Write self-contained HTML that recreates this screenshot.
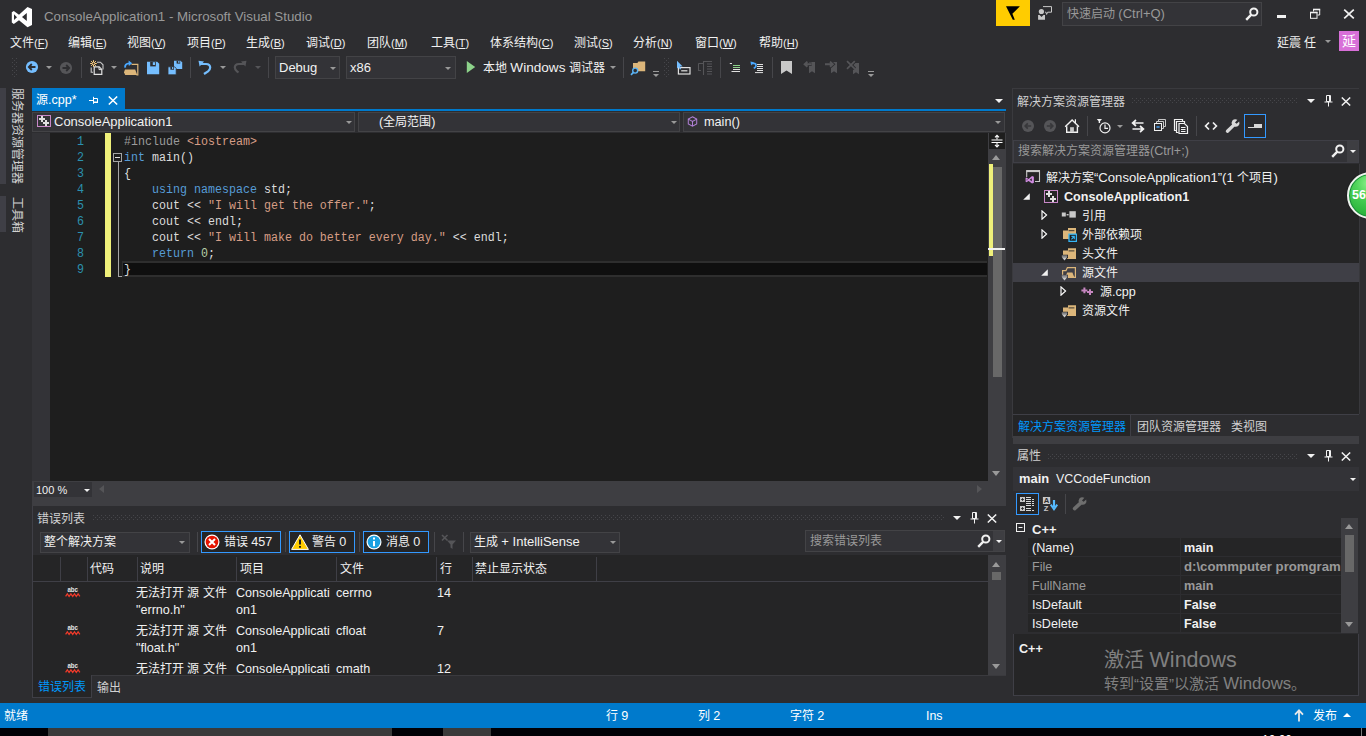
<!DOCTYPE html>
<html lang="zh-CN">
<head>
<meta charset="utf-8">
<title>ConsoleApplication1 - Microsoft Visual Studio</title>
<style>
html,body{margin:0;padding:0;}
html{width:1366px;height:736px;overflow:hidden;background:#2d2d30;}
body{width:1366px;height:736px;overflow:hidden;background:#2d2d30;position:relative;
 font-family:"Liberation Sans",sans-serif;font-size:12px;color:#f1f1f1;line-height:16px;}
#root{position:absolute;left:0;top:0;width:1366px;height:736px;overflow:hidden;background:#2d2d30;}
.a{position:absolute;}
.t{position:absolute;white-space:nowrap;line-height:16px;height:16px;}
.code{margin-top:1px;transform:scaleY(1.12);transform-origin:0 12px;font-family:"Liberation Mono",monospace;font-size:11.667px;line-height:16px;white-space:pre;position:absolute;height:16px;color:#dcdcdc;}
.kw{color:#569cd6;}
.st{color:#d69d85;}
.pp{color:#9b9b9b;}
.nm{color:#b5cea8;}
.ln{margin-top:1px;transform:scaleY(1.12);transform-origin:0 12px;position:absolute;left:50px;width:48px;text-align:right;color:#2b91af;font-family:"Liberation Mono",monospace;font-size:11.667px;line-height:16px;height:16px;}
.grip{position:absolute;height:5px;background-image:radial-gradient(circle at 0.5px 0.5px,#46464a 0.6px,transparent 0.7px),radial-gradient(circle at 2.5px 2.5px,#46464a 0.6px,transparent 0.7px);background-size:4px 4px;}
.combo{position:absolute;background:#333337;border:1px solid #434346;box-sizing:border-box;}
.arr{position:absolute;width:0;height:0;border-left:3px solid transparent;border-right:3px solid transparent;border-top:3px solid #999;}
.l{font-size:12.6px;}
.m{font-size:11px;}
.z{display:inline-block;white-space:nowrap;font-size:inherit;}
.sep{position:absolute;width:1px;background:#46464a;}
</style>
</head>
<body>
<div id="root">

<!-- ===== TITLE BAR ===== -->
<div id="titlebar" class="a" style="left:0;top:0;width:1366px;height:30px;">
  <svg class="a" style="left:0;top:0" width="44" height="32" viewBox="0 0 44 32"><path fill="#fff" fill-rule="evenodd" d="M27.5 6.9L32 9.1V25L27.5 27.2L19 20.2L13.8 24L11.8 22.5V12.2L13.8 10.9L19 14.8ZM26.8 13V21.1L22 17ZM14 14.3V20L17 17.2Z"/></svg>
  <div class="t" style="left:44px;top:9px;font-size:13.3px;color:#999;">ConsoleApplication1 - Microsoft Visual Studio</div>
  <div class="a" style="left:996px;top:0;width:34px;height:26px;background:#ffcc00;"></div>
  <svg class="a" style="left:1004px;top:4px" width="18" height="18" viewBox="0 0 18 18"><path fill="#000" d="M2 2.2H15.9L8.4 9.8L10.8 15.7H8.8Z"/></svg>
  <svg class="a" style="left:1036px;top:5px" width="18" height="16" viewBox="0 0 18 16"><circle cx="5.4" cy="6.5" r="2.6" fill="#c8c8c8"/><path fill="#c8c8c8" d="M2.1 10.1H3.6L5.5 12L7.5 10.1H9V14.7H2.1Z"/><path fill="none" stroke="#c8c8c8" stroke-width="1" d="M7 1.6H15.5V7.2H11.6L10.6 9.4L10 7.2H9.2"/></svg>
  <div class="a" style="left:1062px;top:2px;width:200px;height:24px;background:#333337;border:1px solid #434346;box-sizing:border-box;"></div>
  <div class="t" style="left:1067px;top:6px;color:#999;font-size:12px;"><span class="z" style="width:48px">快速启动</span> <span style="font-size:13px">(Ctrl+Q)</span></div>
  <svg class="a" style="left:1244px;top:6px" width="16" height="16" viewBox="0 0 16 16"><circle cx="9.8" cy="6" r="3.6" fill="none" stroke="#f1f1f1" stroke-width="2"/><path d="M7.3 8.7L2.2 13.8" stroke="#f1f1f1" stroke-width="2.4" stroke-linecap="butt"/></svg>
  <div class="a" style="left:1277px;top:15px;width:9px;height:3px;background:#f1f1f1;"></div>
  <svg class="a" style="left:1309px;top:8px" width="13" height="12" viewBox="0 0 13 12"><path fill="none" stroke="#f1f1f1" stroke-width="1" d="M4.5 3.5V1.5H10.7V7H8.5"/><path d="M4 1.5H11.2" stroke="#f1f1f1" stroke-width="1.6"/><rect x="1.5" y="4.5" width="6.5" height="5.8" fill="none" stroke="#f1f1f1" stroke-width="1"/><path d="M1 4.5H8.5" stroke="#f1f1f1" stroke-width="1.6"/></svg>
  <svg class="a" style="left:1343px;top:9px" width="12" height="10" viewBox="0 0 12 10"><path d="M1.2 0.6L10.8 9.4M10.8 0.6L1.2 9.4" stroke="#f1f1f1" stroke-width="1.7"/></svg>
</div>

<!-- ===== MENU BAR ===== -->
<div id="menubar" class="a" style="left:0;top:30px;width:1366px;height:24px;">
  <div class="t" style="left:10px;top:5px;"><span class="z" style="width:24px">文件</span><span class="m">(<u>F</u>)</span></div>
  <div class="t" style="left:68px;top:5px;"><span class="z" style="width:24px">编辑</span><span class="m">(<u>E</u>)</span></div>
  <div class="t" style="left:127px;top:5px;"><span class="z" style="width:24px">视图</span><span class="m">(<u>V</u>)</span></div>
  <div class="t" style="left:187px;top:5px;"><span class="z" style="width:24px">项目</span><span class="m">(<u>P</u>)</span></div>
  <div class="t" style="left:246px;top:5px;"><span class="z" style="width:24px">生成</span><span class="m">(<u>B</u>)</span></div>
  <div class="t" style="left:306px;top:5px;"><span class="z" style="width:24px">调试</span><span class="m">(<u>D</u>)</span></div>
  <div class="t" style="left:367px;top:5px;"><span class="z" style="width:24px">团队</span><span class="m">(<u>M</u>)</span></div>
  <div class="t" style="left:431px;top:5px;"><span class="z" style="width:24px">工具</span><span class="m">(<u>T</u>)</span></div>
  <div class="t" style="left:490px;top:5px;"><span class="z" style="width:48px">体系结构</span><span class="m">(<u>C</u>)</span></div>
  <div class="t" style="left:574px;top:5px;"><span class="z" style="width:24px">测试</span><span class="m">(<u>S</u>)</span></div>
  <div class="t" style="left:633px;top:5px;"><span class="z" style="width:24px">分析</span><span class="m">(<u>N</u>)</span></div>
  <div class="t" style="left:695px;top:5px;"><span class="z" style="width:24px">窗口</span><span class="m">(<u>W</u>)</span></div>
  <div class="t" style="left:759px;top:5px;"><span class="z" style="width:24px">帮助</span><span class="m">(<u>H</u>)</span></div>
  <div class="t" style="left:1277px;top:5px;">延震 任</div>
  <div class="arr" style="left:1325px;top:10px;"></div>
  <div class="a" style="left:1339px;top:1px;width:20px;height:20px;background:#d86fd8;"></div>
  <div class="t" style="left:1342px;top:3px;font-size:14px;color:#fff;">延</div>
</div>

<!-- ===== TOOLBAR ===== -->
<div id="toolbar" class="a" style="left:0;top:54px;width:1366px;height:30px;">
  <div class="grip" style="left:12px;top:4px;width:5px;height:20px;"></div>
  <!-- back -->
  <svg class="a" style="left:24px;top:5px" width="16" height="16" viewBox="0 0 16 16"><circle cx="8" cy="8" r="6.1" fill="#75beff"/><path d="M11.5 8H5.2M7.8 5L4.8 8L7.8 11" fill="none" stroke="#2d2d30" stroke-width="1.8"/></svg>
  <div class="arr" style="left:46px;top:12px;"></div>
  <svg class="a" style="left:58px;top:6px" width="16" height="16" viewBox="0 0 16 16"><circle cx="8" cy="8" r="6.1" fill="#555558"/><path d="M4.5 8H10.8M8.2 5L11.2 8L8.2 11" fill="none" stroke="#2d2d30" stroke-width="1.8"/></svg>
  <div class="sep" style="left:81px;top:3px;height:21px;"></div>
  <!-- new project -->
  <svg class="a" style="left:89px;top:6px" width="16" height="16" viewBox="0 0 16 16"><path d="M8 2.2H11.4L14 4.8V9.4M2.2 7.4V12.2H4" fill="none" stroke="#c8c8c8" stroke-width="1.1"/><path d="M5.2 6.8H10.2L12.8 9.4V14.4H5.2Z" fill="#2d2d30" stroke="#e0e0e0" stroke-width="1.2"/><path d="M10 6.8V9.6H12.8" fill="none" stroke="#e0e0e0" stroke-width="1"/><path d="M4.5 0.2V6.8M1.2 3.5H7.8M2.1 1.1L6.9 5.9M6.9 1.1L2.1 5.9" stroke="#ffd080" stroke-width="1"/><circle cx="4.5" cy="3.5" r="1" fill="#2d2d30"/></svg>
  <div class="arr" style="left:111px;top:12px;"></div>
  <!-- open -->
  <svg class="a" style="left:123px;top:6px" width="16" height="16" viewBox="0 0 16 16"><path d="M8.5 4.4H14.8V15H13.4" fill="none" stroke="#dcb67a" stroke-width="1.2"/><path d="M2 9.6H12.2L14.2 15H2.2L1 12.2Z" fill="#dcb67a"/><path d="M2.2 7.6Q1.4 3.6 6.4 3.4" fill="none" stroke="#4aa8ff" stroke-width="1.9"/><path d="M5.6 0.6L9.2 3.2L5.8 6Z" fill="#4aa8ff"/></svg>
  <!-- save -->
  <svg class="a" style="left:146px;top:6px" width="16" height="16" viewBox="0 0 16 16"><path d="M1 1.8H11.2L13.2 3.8V14.2H1Z" fill="#75beff"/><rect x="4.2" y="1.8" width="5.6" height="4.6" fill="#2d2d30"/><rect x="6.8" y="2.2" width="2.2" height="2.8" fill="#75beff"/></svg>
  <!-- save all -->
  <svg class="a" style="left:167px;top:6px" width="16" height="16" viewBox="0 0 16 16"><path d="M7 0.8H13.6L15.2 2.4V8.9H7Z" fill="#75beff"/><rect x="9.6" y="0.8" width="3.6" height="2.8" fill="#2d2d30"/><rect x="11.2" y="1" width="1.3" height="1.8" fill="#75beff"/><path d="M1 6.8H7.6L9.2 8.4V14.8H1Z" fill="#75beff" stroke="#2d2d30" stroke-width="0.8"/><rect x="3.4" y="6.9" width="3.6" height="2.8" fill="#2d2d30"/><rect x="5" y="7.1" width="1.3" height="1.8" fill="#75beff"/></svg>
  <div class="sep" style="left:190px;top:3px;height:21px;"></div>
  <!-- undo -->
  <svg class="a" style="left:197px;top:5px" width="16" height="16" viewBox="0 0 16 16"><path d="M4 5H9Q13.2 5 13.2 8.6Q13.2 10.6 11 12.3L7 15" fill="none" stroke="#75beff" stroke-width="2.2"/><path d="M1.5 1.8L7 2.6L2.6 7.6Z" fill="#75beff"/></svg>
  <div class="arr" style="left:220px;top:12px;"></div>
  <!-- redo disabled -->
  <svg class="a" style="left:232px;top:5px" width="16" height="16" viewBox="0 0 16 16"><path d="M12 5H7Q2.8 5 2.8 8.6Q2.8 10.6 5 12.3L6.5 13.5" fill="none" stroke="#555558" stroke-width="2.2"/><path d="M14.5 1.8L9 2.6L13.4 7.6Z" fill="#555558"/></svg>
  <div class="arr" style="left:255px;top:12px;border-top-color:#555558;"></div>
  <div class="sep" style="left:268px;top:3px;height:21px;"></div>
  <div class="combo" style="left:275px;top:2px;width:65px;height:23px;"></div>
  <div class="t" style="left:279px;top:6px;font-size:13px;">Debug</div>
  <div class="arr" style="left:330px;top:13px;"></div>
  <div class="combo" style="left:346px;top:2px;width:110px;height:23px;"></div>
  <div class="t" style="left:350px;top:6px;font-size:13px;">x86</div>
  <div class="arr" style="left:445px;top:13px;"></div>
  <!-- play -->
  <svg class="a" style="left:466px;top:6px" width="10" height="14" viewBox="0 0 10 14"><path d="M0.8 1L9.2 7L0.8 13Z" fill="#8dd28a"/></svg>
  <div class="t" style="left:483px;top:6px;"><span class="z" style="width:24px">本地</span> <span style="font-size:13.6px">Windows</span> <span class="z" style="width:36px">调试器</span></div>
  <div class="arr" style="left:610px;top:12px;"></div>
  <div class="sep" style="left:623px;top:3px;height:21px;"></div>
  <!-- find in files -->
  <svg class="a" style="left:630px;top:6px" width="16" height="16" viewBox="0 0 16 16"><path d="M3 3H7.4L8.4 1.4H15.2V11.2H3Z" fill="#dcb67a"/><circle cx="5.2" cy="10.6" r="2.5" fill="#2d2d30" stroke="#5ab3f5" stroke-width="1.4"/><path d="M3.4 12.4L1 14.8" stroke="#5ab3f5" stroke-width="1.7"/></svg>
  <div class="a" style="left:653px;top:17px;width:6px;height:1px;background:#999;"></div>
  <div class="arr" style="left:653px;top:20px;"></div>
  <div class="grip" style="left:664px;top:4px;width:5px;height:20px;"></div>
  <!-- cursor box -->
  <svg class="a" style="left:676px;top:6px" width="16" height="16" viewBox="0 0 16 16"><rect x="2.4" y="7.6" width="11.6" height="6.4" fill="#2d2d30" stroke="#e0e0e0" stroke-width="1.2"/><path d="M5.2 10.8H11.4" stroke="#e0e0e0" stroke-width="1.2"/><path d="M1 0.8L6.6 6.4L4 6.6L5.2 9L3.8 9.6L2.8 7.2L1 8.6Z" fill="#75beff"/></svg>
  <svg class="a" style="left:697px;top:6px" width="16" height="16" viewBox="0 0 16 16"><path d="M6.5 1V15M1.5 3.5V10.5H4M1.5 3.5H6.5" stroke="#555558" stroke-width="1.1" fill="none"/><path d="M6.5 1.5H15M10 4H15M10 6.5H15M10 9H15M10 11.5H15M10 14H15" stroke="#555558" stroke-width="1.1"/></svg>
  <div class="sep" style="left:720px;top:3px;height:21px;"></div>
  <svg class="a" style="left:728px;top:7px" width="16" height="16" viewBox="0 0 16 16"><path d="M1.8 2.5H4" stroke="#e0e0e0" stroke-width="1"/><path d="M5 4.5H12M5 6.5H12" stroke="#8dd28a" stroke-width="1"/><path d="M5 8.5H12M3.5 10.5H12" stroke="#e0e0e0" stroke-width="1"/></svg>
  <svg class="a" style="left:749px;top:7px" width="16" height="16" viewBox="0 0 16 16"><path d="M8 3.5H14M8 5.5H14M8 7.5H14M8 9.5H14M6 11.6H14" stroke="#e0e0e0" stroke-width="1"/><path d="M3 2.4H4.8Q7 2.4 7 4.4Q7 5.8 5.6 6.8L4.8 7.4" fill="none" stroke="#4aa8ff" stroke-width="1.7"/><path d="M1.4 0.6L5 1.2L2.2 4.4Z" fill="#4aa8ff"/></svg>
  <div class="sep" style="left:772px;top:3px;height:21px;"></div>
  <svg class="a" style="left:779px;top:5px" width="16" height="16" viewBox="0 0 16 16"><path d="M2 2H13V15L7.5 11.5L2 15Z" fill="#c8c8c8"/></svg>
  <svg class="a" style="left:802px;top:6px" width="16" height="16" viewBox="0 0 16 16"><path d="M7 2H13V13.2L10 11.2L7 13.2Z" fill="#555558"/><path d="M9.6 4.2H3M5.4 1.6L2.6 4.2L5.4 6.8" fill="none" stroke="#2d2d30" stroke-width="3.6"/><path d="M9.6 4.2H3M5.4 1.6L2.6 4.2L5.4 6.8" fill="none" stroke="#555558" stroke-width="1.9"/></svg>
  <svg class="a" style="left:823px;top:6px" width="16" height="16" viewBox="0 0 16 16"><path d="M8 2H14V13.2L11 11.2L8 13.2Z" fill="#555558"/><path d="M2 4.2H9.4M7 1.6L9.8 4.2L7 6.8" fill="none" stroke="#2d2d30" stroke-width="3.6"/><path d="M2 4.2H9.4M7 1.6L9.8 4.2L7 6.8" fill="none" stroke="#555558" stroke-width="1.9"/></svg>
  <svg class="a" style="left:845px;top:6px" width="16" height="16" viewBox="0 0 16 16"><path d="M8 3H14V14.2L11 12.2L8 14.2Z" fill="#555558"/><path d="M2 1.2L9.8 8.8M9.8 1.2L2 8.8" fill="none" stroke="#2d2d30" stroke-width="3.4"/><path d="M2 1.2L9.8 8.8M9.8 1.2L2 8.8" fill="none" stroke="#555558" stroke-width="1.7"/></svg>
  <div class="a" style="left:868px;top:17px;width:6px;height:1px;background:#999;"></div>
  <div class="arr" style="left:868px;top:20px;"></div>
</div>

<!-- ===== LEFT STRIP ===== -->
<div id="leftstrip" class="a" style="left:0;top:86px;width:30px;height:610px;">
  <div class="a" style="left:0;top:2px;width:6px;height:96px;background:#3f3f46;"></div>
  <div class="a" style="left:0;top:110px;width:6px;height:36px;background:#3f3f46;"></div>
  <div class="t" style="left:25px;top:2px;transform-origin:0 0;transform:rotate(90deg);color:#d0d0d0;">服务器资源管理器</div>
  <div class="t" style="left:25px;top:111px;transform-origin:0 0;transform:rotate(90deg);color:#d0d0d0;">工具箱</div>
</div>

<!-- ===== EDITOR ===== -->
<div id="editor" class="a" style="left:33px;top:88px;width:973px;height:418px;">
  <!-- tab row -->
  <div class="a" style="left:-1px;top:0;width:93px;height:21px;background:#007acc;"></div>
  <div class="t" style="left:3px;top:4px;color:#fff;"><span class="z" style="width:12px">源</span><span class="l">.cpp*</span></div>
  <svg class="a" style="left:56px;top:8px" width="10" height="8" viewBox="0 0 10 8"><path d="M0 4.5H4M4.5 0.8V7.8M4.5 2.5H8.5V6H4.5M4.5 6.5H9" fill="none" stroke="#fff" stroke-width="1"/></svg>
  <svg class="a" style="left:75px;top:8px" width="10" height="9" viewBox="0 0 10 9"><path d="M0.8 0.5L9.2 8.5M9.2 0.5L0.8 8.5" stroke="#fff" stroke-width="1.5"/></svg>
  <div class="a" style="left:-1px;top:21px;width:974px;height:2px;background:#007acc;"></div>
  <div class="a" style="left:962px;top:11px;width:0;height:0;border-left:4px solid transparent;border-right:4px solid transparent;border-top:4px solid #f1f1f1;"></div>
  <!-- nav bar -->
  <div class="combo" style="left:-1px;top:24px;width:323px;height:20px;"></div>
  <div class="combo" style="left:325px;top:24px;width:322px;height:20px;"></div>
  <div class="combo" style="left:650px;top:24px;width:322px;height:20px;"></div>
  <svg class="a" style="left:4px;top:27px" width="14" height="12" viewBox="0 0 14 12"><rect x="0.5" y="0.5" width="13" height="11" fill="none" stroke="#c888c8" stroke-width="1"/><path d="M2 3H8V5H2ZM4 1H6V7H4ZM6 7H12V9H6ZM8 5H10V11H8Z" fill="#e0e0e0"/></svg>
  <div class="t" style="left:21px;top:26px;font-size:13px;">ConsoleApplication1</div>
  <div class="arr" style="left:313px;top:33px;"></div>
  <div class="t" style="left:346px;top:26px;"><span class="l">(</span><span class="z" style="width:48px">全局范围</span><span class="l">)</span></div>
  <div class="arr" style="left:638px;top:33px;"></div>
  <svg class="a" style="left:653.5px;top:28px" width="11" height="11" viewBox="0 0 12 12"><path d="M6 0.8L10.6 3.4V8.6L6 11.2L1.4 8.6V3.4ZM1.4 3.4L6 6L10.6 3.4M6 6V11.2" fill="none" stroke="#b180d7" stroke-width="1.1"/></svg>
  <div class="t" style="left:671px;top:26px;font-size:12.7px;">main()</div>
  <div class="arr" style="left:962px;top:33px;"></div>
  <!-- text area -->
  <div class="a" style="left:0;top:45px;width:955px;height:348px;background:#1e1e1e;"></div>
  <div class="a" style="left:-1px;top:45px;width:18px;height:348px;background:#333337;"></div>
  <div class="a" style="left:72px;top:45px;width:6px;height:144px;background:#eff07a;"></div>
  <!-- current line -->
  <div class="a" style="left:89px;top:173px;width:865px;height:16px;background:#0f0f0f;border-top:2px solid #2e2e2e;border-bottom:2px solid #2e2e2e;border-left:1px solid #2e2e2e;box-sizing:border-box;"></div>
  <!-- outlining -->
  <div class="a" style="left:80px;top:65px;width:9px;height:9px;border:1px solid #a5a5a5;box-sizing:border-box;background:#1e1e1e;"></div>
  <div class="a" style="left:82px;top:69px;width:5px;height:1px;background:#e0e0e0;"></div>
  <div class="a" style="left:85px;top:74px;width:1px;height:115px;background:#a5a5a5;"></div>
  <div class="a" style="left:85px;top:188px;width:4px;height:1px;background:#a5a5a5;"></div>
  <div class="ln" style="left:17px;width:34px;top:45px;">1</div><div class="code" style="left:91px;top:45px;"><span class="pp">#include</span> <span class="st">&lt;iostream&gt;</span></div>
  <div class="ln" style="left:17px;width:34px;top:61px;">2</div><div class="code" style="left:91px;top:61px;"><span class="kw">int</span> main()</div>
  <div class="ln" style="left:17px;width:34px;top:77px;">3</div><div class="code" style="left:91px;top:77px;">{</div>
  <div class="ln" style="left:17px;width:34px;top:93px;">4</div><div class="code" style="left:91px;top:93px;">    <span class="kw">using</span> <span class="kw">namespace</span> std;</div>
  <div class="ln" style="left:17px;width:34px;top:109px;">5</div><div class="code" style="left:91px;top:109px;">    cout &lt;&lt; <span class="st">"I will get the offer."</span>;</div>
  <div class="ln" style="left:17px;width:34px;top:125px;">6</div><div class="code" style="left:91px;top:125px;">    cout &lt;&lt; endl;</div>
  <div class="ln" style="left:17px;width:34px;top:141px;">7</div><div class="code" style="left:91px;top:141px;">    cout &lt;&lt; <span class="st">"I will make do better every day."</span> &lt;&lt; endl;</div>
  <div class="ln" style="left:17px;width:34px;top:157px;">8</div><div class="code" style="left:91px;top:157px;">    <span class="kw">return</span> <span class="nm">0</span>;</div>
  <div class="ln" style="left:17px;width:34px;top:173px;">9</div><div class="code" style="left:91px;top:173px;">}</div>
  <!-- vertical scrollbar -->
  <div class="a" style="left:955px;top:45px;width:18px;height:373px;background:#3e3e42;"></div>
  <div class="a" style="left:956px;top:45px;width:16px;height:16px;background:#1e1e1e;"></div>
  <svg class="a" style="left:957px;top:46px" width="14" height="14" viewBox="0 0 14 14"><path d="M1.5 6H12.5M1.5 8.5H12.5" stroke="#fff" stroke-width="1.2"/><path d="M7 1.5V5.5M7 9V12.8M5 3.4L7 1.2L9 3.4M5 10.8L7 13L9 10.8" fill="none" stroke="#fff" stroke-width="1.1"/></svg>
  <div class="a" style="left:959px;top:67px;width:0;height:0;border-left:4.5px solid transparent;border-right:4.5px solid transparent;border-bottom:5px solid #999;"></div>
  <div class="a" style="left:960px;top:79px;width:9px;height:210px;background:#686868;"></div>
  <div class="a" style="left:956px;top:76px;width:4px;height:92px;background:#eff07a;"></div>
  <div class="a" style="left:955px;top:160px;width:17px;height:2px;background:#f1f1f1;"></div>
  <div class="a" style="left:959px;top:383px;width:0;height:0;border-left:4.5px solid transparent;border-right:4.5px solid transparent;border-top:5px solid #999;"></div>
  <!-- horizontal scrollbar row -->
  <div class="a" style="left:-1px;top:393px;width:956px;height:25px;background:#3e3e42;"></div>
  <div class="a" style="left:1px;top:394px;width:58px;height:15px;background:#333337;"></div>
  <div class="t" style="left:3px;top:394px;font-size:11px;">100 %</div>
  <div class="arr" style="left:51px;top:401px;border-top-color:#f1f1f1;"></div>
  <div class="a" style="left:66px;top:397px;width:0;height:0;border-top:4.5px solid transparent;border-bottom:4.5px solid transparent;border-right:5px solid #555558;"></div>
  <div class="a" style="left:944px;top:397px;width:0;height:0;border-top:4.5px solid transparent;border-bottom:4.5px solid transparent;border-left:5px solid #555558;"></div>
</div>

<!-- ===== ERROR LIST ===== -->
<div id="errorlist" class="a" style="left:33px;top:506px;width:973px;height:192px;">
  <div class="a" style="left:-1px;top:0;width:1px;height:192px;background:#3f3f46;"></div>
  <div class="a" style="left:0;top:0;width:973px;height:23px;background:#2d2d30;"></div>
  <div class="t" style="left:4px;top:5px;color:#d0d0d0;">错误列表</div>
  <div class="grip" style="left:60px;top:9px;width:851px;"></div>
  <div class="a" style="left:920px;top:10px;width:0;height:0;border-left:4px solid transparent;border-right:4px solid transparent;border-top:4px solid #f1f1f1;"></div>
  <svg class="a" style="left:937px;top:6px" width="9" height="12" viewBox="0 0 9 12"><path d="M2.5 0.5H6.5V6.5H2.5ZM5.5 0.5V6.5M0.5 7H8.5M4.5 7V11.5" fill="none" stroke="#f1f1f1" stroke-width="1"/></svg>
  <svg class="a" style="left:954px;top:8px" width="10" height="9" viewBox="0 0 10 9"><path d="M0.8 0.5L9.2 8.5M9.2 0.5L0.8 8.5" stroke="#f1f1f1" stroke-width="1.5"/></svg>
  <!-- toolbar -->
  <div class="combo" style="left:7px;top:26px;width:150px;height:21px;"></div>
  <div class="t" style="left:11px;top:28px;">整个解决方案</div>
  <div class="arr" style="left:146px;top:35px;"></div>
  <div class="sep" style="left:164px;top:26px;height:20px;"></div>
  <div class="a" style="left:168px;top:25px;width:80px;height:22px;border:1px solid #3399ff;box-sizing:border-box;background:#252526;"></div>
  <svg class="a" style="left:171px;top:28px" width="16" height="16" viewBox="0 0 16 16"><circle cx="8" cy="8" r="7.5" fill="#fff"/><circle cx="8" cy="8" r="6.3" fill="#e51400"/><path d="M5 5L11 11M11 5L5 11" stroke="#fff" stroke-width="2"/></svg>
  <div class="t" style="left:191px;top:28px;"><span class="z" style="width:24px">错误</span> <span class="l">457</span></div>
  <div class="sep" style="left:252px;top:26px;height:20px;"></div>
  <div class="a" style="left:256px;top:25px;width:66px;height:22px;border:1px solid #3399ff;box-sizing:border-box;background:#252526;"></div>
  <svg class="a" style="left:258px;top:28px" width="18" height="16" viewBox="0 0 18 16"><path d="M9 0.8L17.4 15.4H0.6Z" fill="#ffcc00" stroke="#fff" stroke-width="1" stroke-linejoin="round"/><path d="M9 5.5V10.5M9 12V13.8" stroke="#1e1e1e" stroke-width="2"/></svg>
  <div class="t" style="left:279px;top:28px;"><span class="z" style="width:24px">警告</span> <span class="l">0</span></div>
  <div class="sep" style="left:326px;top:26px;height:20px;"></div>
  <div class="a" style="left:330px;top:25px;width:66px;height:22px;border:1px solid #3399ff;box-sizing:border-box;background:#252526;"></div>
  <svg class="a" style="left:333px;top:28px" width="16" height="16" viewBox="0 0 16 16"><circle cx="8" cy="8" r="7.5" fill="#fff"/><circle cx="8" cy="8" r="6.3" fill="#1ba1e2"/><path d="M8 7V12.2M8 3.6V5.6" stroke="#fff" stroke-width="2"/></svg>
  <div class="t" style="left:353px;top:28px;"><span class="z" style="width:24px">消息</span> <span class="l">0</span></div>
  <div class="sep" style="left:401px;top:26px;height:20px;"></div>
  <svg class="a" style="left:408px;top:28px" width="16" height="16" viewBox="0 0 16 16"><path d="M6 6.5H15L11.5 10.5V15L9.5 13.5V10.5Z" fill="#555558"/><path d="M1 1L6.5 6.5M6.5 1L1 6.5" stroke="#555558" stroke-width="1.6"/></svg>
  <div class="sep" style="left:430px;top:26px;height:20px;"></div>
  <div class="combo" style="left:437px;top:26px;width:150px;height:21px;"></div>
  <div class="t" style="left:441px;top:28px;"><span class="z" style="width:24px">生成</span> <span style="font-size:13px">+ IntelliSense</span></div>
  <div class="arr" style="left:577px;top:35px;"></div>
  <div class="combo" style="left:772px;top:24px;width:200px;height:22px;"></div>
  <div class="a" style="left:960px;top:25px;width:11px;height:20px;background:#3e3e42;"></div>
  <div class="t" style="left:777px;top:27px;color:#999;">搜索错误列表</div>
  <svg class="a" style="left:943px;top:27px" width="16" height="16" viewBox="0 0 16 16"><circle cx="9.8" cy="6" r="3.6" fill="none" stroke="#f1f1f1" stroke-width="2"/><path d="M7.3 8.7L2.2 13.8" stroke="#f1f1f1" stroke-width="2.4"/></svg>
  <div class="arr" style="left:963px;top:34px;border-top-color:#f1f1f1;"></div>
  <!-- grid -->
  <div class="a" style="left:0;top:49px;width:955px;height:120px;background:#252526;"></div>
  <div class="a" style="left:0;top:75px;width:955px;height:1px;background:#3f3f46;"></div>
  <div class="a" style="left:27px;top:51px;width:1px;height:24px;background:#3f3f46;"></div>
  <div class="a" style="left:54px;top:51px;width:1px;height:24px;background:#3f3f46;"></div>
  <div class="a" style="left:104px;top:51px;width:1px;height:24px;background:#3f3f46;"></div>
  <div class="a" style="left:203px;top:51px;width:1px;height:24px;background:#3f3f46;"></div>
  <div class="a" style="left:303px;top:51px;width:1px;height:24px;background:#3f3f46;"></div>
  <div class="a" style="left:403px;top:51px;width:1px;height:24px;background:#3f3f46;"></div>
  <div class="a" style="left:439px;top:51px;width:1px;height:24px;background:#3f3f46;"></div>
  <div class="a" style="left:563px;top:51px;width:1px;height:24px;background:#3f3f46;"></div>
  <div class="t" style="left:57px;top:55px;">代码</div>
  <div class="t" style="left:107px;top:55px;">说明</div>
  <div class="t" style="left:207px;top:55px;">项目</div>
  <div class="t" style="left:307px;top:55px;">文件</div>
  <div class="t" style="left:407px;top:55px;">行</div>
  <div class="t" style="left:442px;top:55px;">禁止显示状态</div>
  <svg class="a" style="left:31.5px;top:79px" width="16" height="13" viewBox="0 0 16 13"><text x="2.4" y="6.6" font-family="Liberation Sans,sans-serif" font-size="7.4" font-weight="bold" fill="#e6e6e6" textLength="10.6" lengthAdjust="spacingAndGlyphs">abc</text><path d="M0.6 11.4L2.3 8.8L4.1 11.4L5.9 8.8L7.7 11.4L9.5 8.8L11.3 11.4L13.1 8.8L14.9 11.4" fill="none" stroke="#f03a2a" stroke-width="1.2"/></svg>
  <div class="t" style="left:103px;top:79px;">无法打开 源 文件</div>
  <div class="t l" style="left:103px;top:96px;">"errno.h"</div>
  <div class="t l" style="left:203px;top:79px;">ConsoleApplicati</div>
  <div class="t l" style="left:203px;top:96px;">on1</div>
  <div class="t l" style="left:303px;top:79px;">cerrno</div>
  <div class="t l" style="left:404px;top:79px;">14</div>
  <svg class="a" style="left:31.5px;top:117px" width="16" height="13" viewBox="0 0 16 13"><text x="2.4" y="6.6" font-family="Liberation Sans,sans-serif" font-size="7.4" font-weight="bold" fill="#e6e6e6" textLength="10.6" lengthAdjust="spacingAndGlyphs">abc</text><path d="M0.6 11.4L2.3 8.8L4.1 11.4L5.9 8.8L7.7 11.4L9.5 8.8L11.3 11.4L13.1 8.8L14.9 11.4" fill="none" stroke="#f03a2a" stroke-width="1.2"/></svg>
  <div class="t" style="left:103px;top:117px;">无法打开 源 文件</div>
  <div class="t l" style="left:103px;top:134px;">"float.h"</div>
  <div class="t l" style="left:203px;top:117px;">ConsoleApplicati</div>
  <div class="t l" style="left:203px;top:134px;">on1</div>
  <div class="t l" style="left:303px;top:117px;">cfloat</div>
  <div class="t l" style="left:404px;top:117px;">7</div>
  <svg class="a" style="left:31.5px;top:155px" width="16" height="13" viewBox="0 0 16 13"><text x="2.4" y="6.6" font-family="Liberation Sans,sans-serif" font-size="7.4" font-weight="bold" fill="#e6e6e6" textLength="10.6" lengthAdjust="spacingAndGlyphs">abc</text><path d="M0.6 11.4L2.3 8.8L4.1 11.4L5.9 8.8L7.7 11.4L9.5 8.8L11.3 11.4L13.1 8.8L14.9 11.4" fill="none" stroke="#f03a2a" stroke-width="1.2"/></svg>
  <div class="t" style="left:103px;top:155px;">无法打开 源 文件</div>
  <div class="t l" style="left:203px;top:155px;">ConsoleApplicati</div>
  <div class="t l" style="left:303px;top:155px;">cmath</div>
  <div class="t l" style="left:404px;top:155px;">12</div>
  <!-- cover below grid -->
  <div class="a" style="left:0;top:169px;width:973px;height:23px;background:#2d2d30;"></div>
  <div class="a" style="left:58px;top:169px;width:915px;height:1px;background:#3a3a3e;"></div>
  <!-- scrollbar -->
  <div class="a" style="left:955px;top:49px;width:18px;height:120px;background:#3e3e42;"></div>
  <div class="a" style="left:959px;top:56px;width:0;height:0;border-left:4.5px solid transparent;border-right:4.5px solid transparent;border-bottom:5px solid #999;"></div>
  <div class="a" style="left:959px;top:66px;width:9px;height:8px;background:#686868;"></div>
  <div class="a" style="left:959px;top:158px;width:0;height:0;border-left:4.5px solid transparent;border-right:4.5px solid transparent;border-top:5px solid #999;"></div>
  <!-- bottom tabs -->
  <div class="a" style="left:0;top:169px;width:58px;height:22px;background:#252526;border-right:1px solid #3f3f46;border-bottom:1px solid #3f3f46;box-sizing:content-box;"></div>
  <div class="t" style="left:5px;top:173px;color:#0097fb;">错误列表</div>
  <div class="t" style="left:64px;top:174px;color:#d0d0d0;">输出</div>
</div>

<!-- ===== SOLUTION EXPLORER ===== -->
<div id="solexp" class="a" style="left:1013px;top:90px;width:346px;height:348px;">
  <div class="a" style="left:-1px;top:-2px;width:347px;height:350px;border-left:1px solid #3a3a3e;border-top:1px solid #3a3a3e;box-sizing:border-box;"></div>
  <div class="t" style="left:4px;top:4px;color:#d0d0d0;">解决方案资源管理器</div>
  <div class="grip" style="left:119px;top:8px;width:166px;"></div>
  <div class="a" style="left:294px;top:9px;width:0;height:0;border-left:4px solid transparent;border-right:4px solid transparent;border-top:4px solid #f1f1f1;"></div>
  <svg class="a" style="left:311px;top:5px" width="9" height="12" viewBox="0 0 9 12"><path d="M2.5 0.5H6.5V6.5H2.5ZM5.5 0.5V6.5M0.5 7H8.5M4.5 7V11.5" fill="none" stroke="#f1f1f1" stroke-width="1"/></svg>
  <svg class="a" style="left:328px;top:7px" width="10" height="9" viewBox="0 0 10 9"><path d="M0.8 0.5L9.2 8.5M9.2 0.5L0.8 8.5" stroke="#f1f1f1" stroke-width="1.5"/></svg>
  <!-- toolbar -->
  <svg class="a" style="left:8px;top:29px" width="14" height="14" viewBox="0 0 14 14"><circle cx="7" cy="7" r="6" fill="#555558"/><path d="M10.2 7H4.6M6.8 4.4L4.2 7L6.8 9.6" fill="none" stroke="#38383b" stroke-width="1.7"/></svg>
  <svg class="a" style="left:30px;top:29px" width="14" height="14" viewBox="0 0 14 14"><circle cx="7" cy="7" r="6" fill="#555558"/><path d="M3.8 7H9.4M7.2 4.4L9.8 7L7.2 9.6" fill="none" stroke="#38383b" stroke-width="1.7"/></svg>
  <svg class="a" style="left:51px;top:28px" width="16" height="16" viewBox="0 0 16 16"><path d="M1.2 8.8L8.1 1.9L15 8.8" fill="none" stroke="#f1f1f1" stroke-width="1.4"/><path d="M2.7 8.2V14.3H13.4V8.2" fill="none" stroke="#f1f1f1" stroke-width="1.4"/><rect x="6.1" y="9.2" width="3.8" height="5" fill="#c8c8c8"/><path d="M11.4 1.2V5" stroke="#f1f1f1" stroke-width="1.2"/></svg>
  <div class="sep" style="left:74px;top:26px;height:20px;"></div>
  <svg class="a" style="left:83px;top:28px" width="16" height="16" viewBox="0 0 16 16"><circle cx="9" cy="9.9" r="5" fill="none" stroke="#f1f1f1" stroke-width="1.2"/><path d="M9 6.6V10.4H12" fill="none" stroke="#f1f1f1" stroke-width="1.2"/><path d="M0.8 1H6L4.1 3.2V5H2.7V3.2Z" fill="#f1f1f1"/></svg>
  <div class="arr" style="left:104px;top:35px;"></div>
  <svg class="a" style="left:117px;top:28px" width="16" height="16" viewBox="0 0 16 16"><path d="M13.5 5H3M6 2L2.6 5L6 8" fill="none" stroke="#f1f1f1" stroke-width="1.7"/><path d="M2.5 11H13M10 8L13.4 11L10 14" fill="none" stroke="#f1f1f1" stroke-width="1.7"/></svg>
  <svg class="a" style="left:139px;top:28px" width="16" height="16" viewBox="0 0 16 16"><path d="M6.5 3.5V1.5H13.5V8.5H11.5M4.5 5.5V3.5H11.5V10.5H9.5" fill="none" stroke="#c8c8c8" stroke-width="1"/><rect x="2.5" y="5.5" width="7" height="7" fill="none" stroke="#f1f1f1" stroke-width="1"/><path d="M4.4 9H7.6" stroke="#4aa8ff" stroke-width="1.4"/></svg>
  <svg class="a" style="left:160px;top:28px" width="16" height="16" viewBox="0 0 16 16"><path d="M3.5 12.5H1.5V1.5H9.5V3" fill="none" stroke="#f1f1f1" stroke-width="1.2"/><path d="M5.5 14.5H3.5V3.5H11.5V5" fill="none" stroke="#f1f1f1" stroke-width="1.2"/><path d="M6 5.5H11.5L14.5 8.5V15.5H6Z" fill="#2d2d30" stroke="#f1f1f1" stroke-width="1.2"/><path d="M8 9.5H12.5M8 11.5H12.5M8 13.5H12.5" stroke="#f1f1f1" stroke-width="1"/></svg>
  <div class="sep" style="left:183px;top:26px;height:20px;"></div>
  <svg class="a" style="left:191px;top:28px" width="14" height="16" viewBox="0 0 14 16"><path d="M5 4.5L1.6 8L5 11.5M9 4.5L12.4 8L9 11.5" fill="none" stroke="#f1f1f1" stroke-width="1.7"/></svg>
  <svg class="a" style="left:212px;top:28px" width="16" height="16" viewBox="0 0 16 16"><path d="M2.4 13.2L8.2 7.6" stroke="#d8d8d8" stroke-width="3.3" stroke-linecap="round"/><path d="M14.2 3.4L11.6 5.8L10 4.4L12.4 1.8Q9.4 0.4 7.4 2.6Q6 4.6 7.2 6.8L9 8.4Q11.2 9.4 13.2 8Q15.2 6.2 14.2 3.4Z" fill="#d8d8d8"/></svg>
  <div class="a" style="left:231px;top:24px;width:22px;height:24px;border:1px solid #3399ff;box-sizing:border-box;background:#2a2a2d;"></div>
  <div class="a" style="left:235px;top:37px;width:14px;height:1px;background:#d8d8d8;"></div>
  <div class="a" style="left:241px;top:34px;width:8px;height:4px;background:#d8d8d8;"></div>
  <!-- search -->
  <div class="a" style="left:0;top:50px;width:346px;height:23px;background:#333337;border:1px solid #3f3f46;box-sizing:border-box;"></div>
  <div class="a" style="left:334px;top:51px;width:11px;height:21px;background:#3e3e42;"></div>
  <div class="t" style="left:5px;top:53px;color:#999;"><span class="z" style="width:132px">搜索解决方案资源管理器</span><span class="l">(Ctrl+;)</span></div>
  <svg class="a" style="left:317px;top:53px" width="16" height="16" viewBox="0 0 16 16"><circle cx="9.8" cy="6" r="3.6" fill="none" stroke="#f1f1f1" stroke-width="2"/><path d="M7.3 8.7L2.2 13.8" stroke="#f1f1f1" stroke-width="2.4"/></svg>
  <div class="arr" style="left:336.5px;top:60px;border-top-color:#f1f1f1;"></div>
  <!-- tree -->
  <div class="a" style="left:0;top:74px;width:346px;height:250px;background:#252526;"></div>
  <div class="a" style="left:0;top:173px;width:346px;height:19px;background:#3f3f46;"></div>
  <!-- row1 solution -->
  <svg class="a" style="left:12px;top:80px" width="16" height="16" viewBox="0 0 16 16"><path d="M1.7 7V1H14.5V11.5H10" fill="none" stroke="#c8c8c8" stroke-width="1.1"/><rect x="1.2" y="0" width="13.8" height="2.1" fill="#c8c8c8"/><g transform="translate(0.6,6) scale(0.41,0.37) translate(-11.8,-6.9)"><path fill="#d08ce0" fill-rule="evenodd" d="M27.5 6.9L32 9.1V25L27.5 27.2L19 20.2L13.8 24L11.8 22.5V12.2L13.8 10.9L19 14.8ZM26.8 13V21.1L22 17ZM14.6 14.8V19.4L17 17.2Z"/></g></svg>
  <div class="t" style="left:33px;top:80px;"><span class="z" style="width:48px">解决方案</span><span style="font-size:13.1px">“ConsoleApplication1”(1 </span><span class="z" style="width:36px">个项目</span><span style="font-size:13.1px">)</span></div>
  <!-- row2 project -->
  <svg class="a" style="left:10px;top:102.5px" width="7" height="7" viewBox="0 0 7 7"><path d="M6.8 0.2V6.8H0.2Z" fill="#f1f1f1"/></svg>
  <svg class="a" style="left:31px;top:100px" width="14" height="13" viewBox="0 0 14 13"><rect x="0.5" y="0.5" width="13" height="12" fill="none" stroke="#c888c8" stroke-width="1"/><path d="M2 3H8V5H2ZM4 1H6V7H4ZM6 8H12V10H6ZM8 6H10V12H8Z" fill="#e0e0e0"/></svg>
  <div class="t" style="left:51px;top:99px;font-weight:bold;font-size:12.6px;">ConsoleApplication1</div>
  <!-- row3 references -->
  <svg class="a" style="left:28px;top:120px" width="7" height="10" viewBox="0 0 7 10"><path d="M1 0.8L5.6 5L1 9.2Z" fill="none" stroke="#fff" stroke-width="1.15"/></svg>
  <svg class="a" style="left:48px;top:118px" width="16" height="14" viewBox="0 0 16 14"><rect x="0.8" y="4.5" width="4" height="4" fill="#c8c8c8"/><rect x="5.6" y="6" width="2" height="1.4" fill="#c8c8c8"/><rect x="8.4" y="3.2" width="6.4" height="6.4" fill="#c8c8c8"/></svg>
  <div class="t" style="left:69px;top:118px;">引用</div>
  <!-- row4 external deps -->
  <svg class="a" style="left:28px;top:139px" width="7" height="10" viewBox="0 0 7 10"><path d="M1 0.8L5.6 5L1 9.2Z" fill="none" stroke="#fff" stroke-width="1.15"/></svg>
  <svg class="a" style="left:48px;top:136px" width="16" height="16" viewBox="0 0 16 16"><path d="M2 4.4H7V2H15V13H2Z" fill="#dcb67a"/><path d="M7.6 4.7H13.4" stroke="#252526" stroke-width="0.9"/><rect x="8" y="8.2" width="7.4" height="7.2" fill="#1e1e1e" stroke="#35b5f5" stroke-width="1.3"/><path d="M10.4 10.4H13.3V13.3M13.2 10.5L10.4 13.3" fill="none" stroke="#35b5f5" stroke-width="1.1"/></svg>
  <div class="t" style="left:69px;top:137px;">外部依赖项</div>
  <!-- row5 headers -->
  <svg class="a" style="left:48px;top:156px" width="16" height="16" viewBox="0 0 16 16"><path d="M2 4.6H7V2.2H15V13H2Z" fill="#dcb67a"/><path d="M7.6 4.9H13.4" stroke="#252526" stroke-width="0.9"/><path d="M0 8.8H7V11.5L4.4 15H2.6L0 11.5Z" fill="#252526"/><path d="M0.8 11.2H6.2L3.5 14.4Z" fill="#c8c8c8"/><rect x="0.8" y="9.6" width="5.4" height="1" fill="#c8c8c8"/></svg>
  <div class="t" style="left:69px;top:156px;">头文件</div>
  <!-- row6 source -->
  <svg class="a" style="left:28px;top:178.5px" width="7" height="7" viewBox="0 0 7 7"><path d="M6.8 0.2V6.8H0.2Z" fill="#f1f1f1"/></svg>
  <svg class="a" style="left:48px;top:175px" width="16" height="16" viewBox="0 0 16 16"><path d="M1.6 11V5.6H5L6.4 2.6H14.4V12.4H7" fill="none" stroke="#dcb67a" stroke-width="1.2"/><path d="M4 12.4L6.2 7.4H11.4L13.4 12.4Z" fill="#dcb67a"/><path d="M0 9.8H7V12.5L4.4 16H2.6L0 12.5Z" fill="#3f3f46"/><path d="M0.8 12.2H6.2L3.5 15.4Z" fill="#c8c8c8"/><rect x="0.8" y="10.6" width="5.4" height="1" fill="#c8c8c8"/></svg>
  <div class="t" style="left:69px;top:175px;">源文件</div>
  <!-- row7 cpp -->
  <svg class="a" style="left:46.5px;top:196px" width="7" height="10" viewBox="0 0 7 10"><path d="M1 0.8L5.6 5L1 9.2Z" fill="none" stroke="#fff" stroke-width="1.15"/></svg>
  <svg class="a" style="left:67px;top:196px" width="14" height="10" viewBox="0 0 14 10"><path d="M4.4 1.6V7.2M1.4 4.4H7.4M10 3.3V8.9M7 6.1H13" stroke="#c586c0" stroke-width="2"/></svg>
  <div class="t" style="left:87px;top:194px;"><span class="z" style="width:12px">源</span><span class="l">.cpp</span></div>
  <!-- row8 resources -->
  <svg class="a" style="left:48px;top:213px" width="16" height="16" viewBox="0 0 16 16"><path d="M2 4.6H7V2.2H15V13H2Z" fill="#dcb67a"/><path d="M7.6 4.9H13.4" stroke="#252526" stroke-width="0.9"/><path d="M0 8.8H7V11.5L4.4 15H2.6L0 11.5Z" fill="#252526"/><path d="M0.8 11.2H6.2L3.5 14.4Z" fill="#c8c8c8"/><rect x="0.8" y="9.6" width="5.4" height="1" fill="#c8c8c8"/></svg>
  <div class="t" style="left:69px;top:213px;">资源文件</div>
  <!-- bottom tabs -->
  <div class="a" style="left:0;top:324px;width:346px;height:1px;background:#3f3f46;"></div>
  <div class="a" style="left:0;top:325px;width:118px;height:21px;background:#252526;border-right:1px solid #3f3f46;box-sizing:border-box;"></div>
  <div class="t" style="left:5px;top:329px;color:#0097fb;">解决方案资源管理器</div>
  <div class="t" style="left:124px;top:329px;color:#d0d0d0;">团队资源管理器</div>
  <div class="t" style="left:218px;top:329px;color:#d0d0d0;">类视图</div>
  <div class="a" style="left:0;top:346px;width:346px;height:8px;background:#3e3e42;"></div>
</div>
<!-- green ball overlay -->
<div class="a" style="left:1359px;top:164px;width:1px;height:250px;background:#38383c;"></div>
<div class="a" style="left:1347px;top:172px;width:47px;height:47px;border-radius:50%;background:radial-gradient(circle at 45% 22%,#8af08a 0%,#4fd45a 30%,#2fb83f 70%,#1f9a30 100%);border:2.5px solid #eef3ee;box-sizing:border-box;box-shadow:inset 0 0 0 1px #1c8a3c,0 0 2px rgba(0,0,0,.5);"></div>
<div class="t" style="left:1352px;top:187px;color:#fff;font-weight:bold;font-size:12.5px;">56</div>

<!-- ===== PROPERTIES ===== -->
<div id="props" class="a" style="left:1013px;top:444px;width:346px;height:252px;">
  <div class="t" style="left:4px;top:4px;color:#d0d0d0;">属性</div>
  <div class="grip" style="left:35px;top:10px;width:250px;"></div>
  <div class="a" style="left:294px;top:10px;width:0;height:0;border-left:4px solid transparent;border-right:4px solid transparent;border-top:4px solid #f1f1f1;"></div>
  <svg class="a" style="left:311px;top:6px" width="9" height="12" viewBox="0 0 9 12"><path d="M2.5 0.5H6.5V6.5H2.5ZM5.5 0.5V6.5M0.5 7H8.5M4.5 7V11.5" fill="none" stroke="#f1f1f1" stroke-width="1"/></svg>
  <svg class="a" style="left:328px;top:8px" width="10" height="9" viewBox="0 0 10 9"><path d="M0.8 0.5L9.2 8.5M9.2 0.5L0.8 8.5" stroke="#f1f1f1" stroke-width="1.5"/></svg>
  <!-- object combo -->
  <div class="a" style="left:0;top:23px;width:346px;height:24px;background:#333337;"></div>
  <div class="t" style="left:6px;top:27px;font-weight:bold;font-size:12.9px;">main</div>
  <div class="t" style="left:43px;top:27px;font-size:12.4px;">VCCodeFunction</div>
  <div class="arr" style="left:337px;top:34px;border-top-color:#f1f1f1;"></div>
  <!-- toolbar -->
  <div class="a" style="left:3px;top:49px;width:23px;height:22px;border:1px solid #3399ff;box-sizing:border-box;background:#252526;"></div>
  <svg class="a" style="left:6px;top:52px" width="17" height="16" viewBox="0 0 17 16"><rect x="1" y="1" width="5" height="5" fill="#c8c8c8"/><path d="M2.2 3.5H4.8M3.5 2.2V4.8" stroke="#252526" stroke-width="1"/><rect x="1" y="10" width="5" height="5" fill="#c8c8c8"/><path d="M2.2 12.5H4.8M3.5 11.2V13.8" stroke="#252526" stroke-width="1"/><path d="M7 1.5H12M7 3.5H12M7 5.5H12M7 7.5H12M7 9.5H12M7 12.5H12M7 14.5H12" stroke="#d8d8d8" stroke-width="1"/><path d="M13 3.5H15M13 5.5H15M13 7.5H15M13 9.5H15M13 14.5H15" stroke="#d8d8d8" stroke-width="1"/></svg>
  <svg class="a" style="left:29px;top:52px" width="17" height="16" viewBox="0 0 17 16"><rect x="0.9" y="1" width="7.3" height="7" fill="#c8c8c8"/><text x="1.7" y="7.3" font-family="Liberation Sans,sans-serif" font-size="7.6" font-weight="bold" fill="#2d2d30">A</text><text x="1.8" y="15.2" font-family="Liberation Sans,sans-serif" font-size="7.6" font-weight="bold" fill="#c8c8c8">Z</text><path d="M12 4V11" stroke="#55bbff" stroke-width="2.2"/><path d="M8.8 8.6L12 13.2L15.2 8.6" fill="none" stroke="#55bbff" stroke-width="2"/></svg>
  <div class="sep" style="left:52px;top:50px;height:20px;"></div>
  <svg class="a" style="left:59px;top:52px" width="16" height="16" viewBox="0 0 16 16"><path d="M2.6 12.6L8 7.6" stroke="#6e6e6e" stroke-width="3.6" stroke-linecap="round"/><path d="M14.2 3.4L11.6 5.8L10 4.4L12.4 1.8Q9.4 0.4 7.4 2.6Q6 4.6 7.2 6.8L9 8.4Q11.2 9.4 13.2 8Q15.2 6.2 14.2 3.4Z" fill="#6e6e6e"/></svg>
  <!-- grid -->
  <div class="a" style="left:15px;top:94px;width:313px;height:95px;background:#252526;"></div>
  <svg class="a" style="left:2.5px;top:78.5px" width="10" height="10" viewBox="0 0 10 10"><rect x="0.5" y="0.5" width="8" height="8" fill="none" stroke="#f1f1f1" stroke-width="1"/><path d="M2.5 4.5H6.5" stroke="#f1f1f1" stroke-width="1"/></svg>
  <div class="t" style="left:19px;top:78px;font-weight:bold;font-size:13px;">C++</div>
  <div class="a" style="left:15px;top:112px;width:313px;height:1px;background:#2d2d30;"></div>
  <div class="t" style="left:19px;top:96px;color:#f1f1f1;font-size:12.6px;">(Name)</div>
  <div class="t" style="left:171px;top:96px;color:#f1f1f1;font-weight:bold;font-size:12.6px;width:157px;overflow:hidden;">main</div>
  <div class="a" style="left:15px;top:131px;width:313px;height:1px;background:#2d2d30;"></div>
  <div class="t" style="left:19px;top:115px;color:#999;font-size:12.6px;">File</div>
  <div class="t" style="left:171px;top:115px;color:#999;font-weight:bold;font-size:13.2px;width:157px;overflow:hidden;">d:\commputer promgram</div>
  <div class="a" style="left:15px;top:150px;width:313px;height:1px;background:#2d2d30;"></div>
  <div class="t" style="left:19px;top:134px;color:#999;font-size:12.6px;">FullName</div>
  <div class="t" style="left:171px;top:134px;color:#999;font-weight:bold;font-size:12.6px;width:157px;overflow:hidden;">main</div>
  <div class="a" style="left:15px;top:169px;width:313px;height:1px;background:#2d2d30;"></div>
  <div class="t" style="left:19px;top:153px;color:#f1f1f1;font-size:12.6px;">IsDefault</div>
  <div class="t" style="left:171px;top:153px;color:#f1f1f1;font-weight:bold;font-size:12.6px;width:157px;overflow:hidden;">False</div>
  <div class="a" style="left:15px;top:188px;width:313px;height:1px;background:#2d2d30;"></div>
  <div class="t" style="left:19px;top:172px;color:#f1f1f1;font-size:12.6px;">IsDelete</div>
  <div class="t" style="left:171px;top:172px;color:#f1f1f1;font-weight:bold;font-size:12.6px;width:157px;overflow:hidden;">False</div>
  <div class="a" style="left:167px;top:94px;width:1px;height:95px;background:#2d2d30;"></div>
  <!-- scrollbar -->
  <div class="a" style="left:328px;top:74px;width:17px;height:115px;background:#3e3e42;"></div>
  <div class="a" style="left:332px;top:80px;width:0;height:0;border-left:4.5px solid transparent;border-right:4.5px solid transparent;border-bottom:5px solid #999;"></div>
  <div class="a" style="left:332px;top:91px;width:9px;height:37px;background:#686868;"></div>
  <div class="a" style="left:332px;top:178px;width:0;height:0;border-left:4.5px solid transparent;border-right:4.5px solid transparent;border-top:5px solid #999;"></div>
  <!-- description -->
  <div class="a" style="left:0;top:190px;width:346px;height:62px;background:#252526;border:1px solid #3f3f46;border-top:none;box-sizing:border-box;"></div>
  <div class="t" style="left:6px;top:197px;font-weight:bold;font-size:12.6px;">C++</div>
  <div class="t" style="left:91px;top:204px;height:24px;line-height:24px;font-size:20px;color:#808080;"><span class="z" style="width:40px">激活</span> <span style="font-size:21.5px">Windows</span></div>
  <div class="t" style="left:91px;top:230px;height:20px;line-height:20px;font-size:15px;color:#808080;"><span class="z" style="width:30px">转到</span>“<span class="z" style="width:30px">设置</span>”<span class="z" style="width:45px">以激活</span> <span style="font-size:16.8px">Windows</span><span class="z" style="width:15px">。</span></div>
</div>

<!-- ===== STATUS BAR ===== -->
<div id="statusbar" class="a" style="left:0;top:703px;width:1366px;height:25px;background:#007acc;">
  <div class="t" style="left:4px;top:5px;color:#fff;">就绪</div>
  <div class="t" style="left:606px;top:5px;color:#fff;"><span class="z" style="width:12px">行</span> <span class="l">9</span></div>
  <div class="t" style="left:698px;top:5px;color:#fff;"><span class="z" style="width:12px">列</span> <span class="l">2</span></div>
  <div class="t" style="left:790px;top:5px;color:#fff;"><span class="z" style="width:24px">字符</span> <span class="l">2</span></div>
  <div class="t" style="left:926px;top:5px;color:#fff;font-size:12.4px;">Ins</div>
  <svg class="a" style="left:1294px;top:6px" width="10" height="13" viewBox="0 0 10 13"><path d="M5 12.5V2M1 5.6L5 1.4L9 5.6" fill="none" stroke="#e8e8e8" stroke-width="1.8"/></svg>
  <div class="t" style="left:1313px;top:5px;color:#fff;">发布</div>
  <div class="a" style="left:1343px;top:10px;width:0;height:0;border-left:4px solid transparent;border-right:4px solid transparent;border-bottom:4px solid #fff;"></div>
</div>

<!-- ===== TASKBAR STRIP ===== -->
<div id="taskbar" class="a" style="left:0;top:728px;width:1366px;height:8px;background:#000005;">
  <div class="a" style="left:48px;top:0;width:344px;height:8px;background:#3a3a3a;"></div>
  <div class="a" style="left:443px;top:0;width:48px;height:8px;background:#3a3a3a;"></div>
  <div class="a" style="left:1361px;top:0;width:1px;height:8px;background:#777;"></div>
  <div class="t" style="left:1262px;top:4px;color:#fff;font-size:12px;">10:00</div>
</div>

</div>
</body>
</html>
